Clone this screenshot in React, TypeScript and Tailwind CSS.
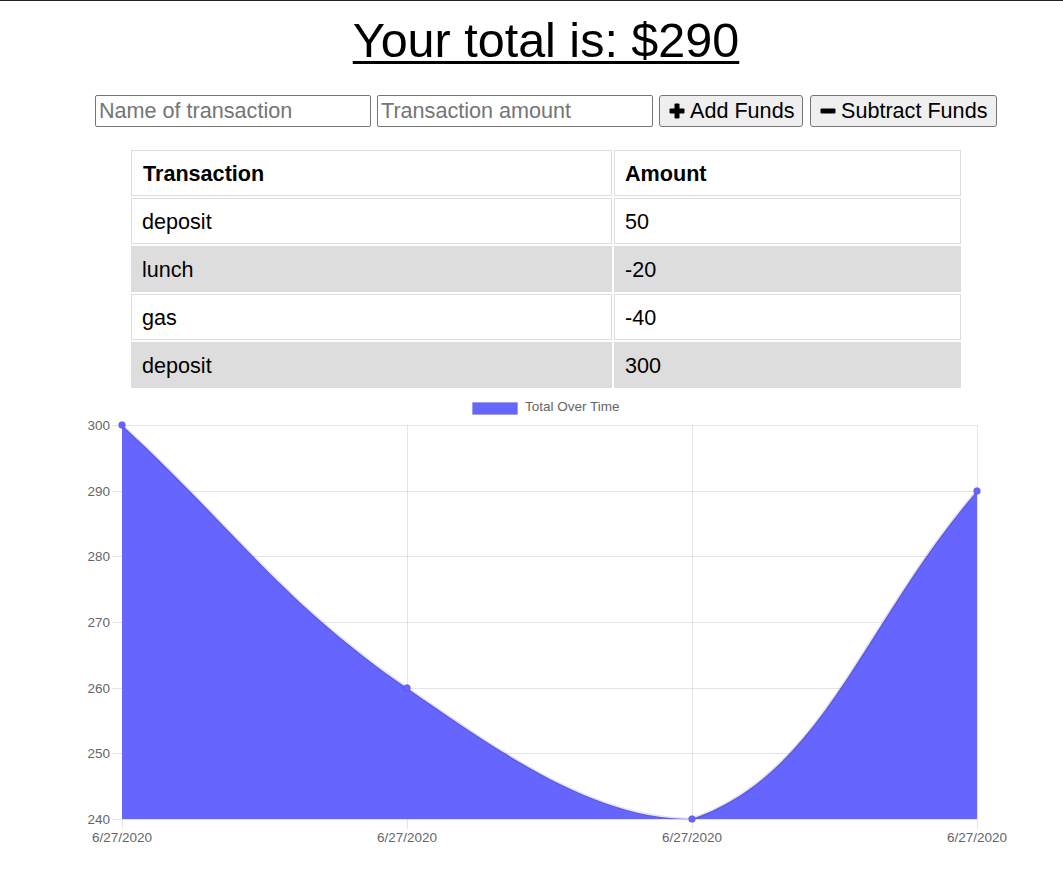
import React from "react";

const rows = [
  { name: "deposit", amount: "50" },
  { name: "lunch", amount: "-20" },
  { name: "gas", amount: "-40" },
  { name: "deposit", amount: "300" },
];

const yTicks = [300, 290, 280, 270, 260, 250, 240];
const xTicks = [122, 407, 692, 977];
const top = 425;
const bottom = 819;
const step = (bottom - top) / 6;

function PlusIcon() {
  return (
    <svg width={16} height={16} viewBox="0 0 16 16" className="block">
      <rect x={5.5} y={0.5} width={5} height={15} rx={1} fill="#000" />
      <rect x={0.5} y={5.5} width={15} height={5} rx={1} fill="#000" />
    </svg>
  );
}

function MinusIcon() {
  return (
    <svg width={16} height={16} viewBox="0 0 16 16" className="block">
      <rect x={0.5} y={5.5} width={15} height={5} rx={1} fill="#000" />
    </svg>
  );
}

function Chart() {
  const curve =
    "M122,425 C236,530.2 281,600.9 407,688 C509,758.5 596.4,819 692,819 C824.4,773.2 863,622.2 977,491";
  const pts: [number, number][] = [
    [122, 425],
    [407, 688],
    [692, 819],
    [977, 491],
  ];
  return (
    <svg width={1063} height={472} className="block" style={{ fontFamily: "'Liberation Sans', Arial, sans-serif" }}>
      <g transform="translate(0,-388)">
        <rect x={472.5} y={402.5} width={45} height={12} fill="#6666ff" stroke="rgba(0,0,0,0.1)" strokeWidth={1} />
        <text x={525} y={407.5} fontSize={13.5} fill="#666" dominantBaseline="middle">
          Total Over Time
        </text>
        {yTicks.map((v, i) => {
          const y = Math.round(top + i * step) + 0.5;
          return (
            <g key={v}>
              <line x1={112} x2={977} y1={y} y2={y} stroke="rgba(0,0,0,0.1)" strokeWidth={1} />
              <text x={110} y={y + 0.5} fontSize={13.5} fill="#666" textAnchor="end" dominantBaseline="middle">
                {v}
              </text>
            </g>
          );
        })}
        {xTicks.map((x) => (
          <g key={x}>
            <line x1={x + 0.5} x2={x + 0.5} y1={top} y2={bottom + 10} stroke="rgba(0,0,0,0.1)" strokeWidth={1} />
            <text x={x} y={838.5} fontSize={13.5} fill="#666" textAnchor="middle" dominantBaseline="middle">
              6/27/2020
            </text>
          </g>
        ))}
        <path d={`${curve} L977,819 L122,819 Z`} fill="#6666ff" />
        <path d={curve} fill="none" stroke="rgba(0,0,0,0.1)" strokeWidth={3} />
        {pts.map(([x, y], i) => (
          <circle key={i} cx={x} cy={y} r={3.5} fill="#6666ff" stroke="rgba(0,0,0,0.1)" strokeWidth={1} />
        ))}
      </g>
    </svg>
  );
}

export default function App() {
  return (
    <div className="w-[1063px] min-h-[889px] bg-white border-t border-[#222] font-['Liberation_Sans',Arial,sans-serif] text-black">
      <div className="pl-[29px]">
        <h1 className="mt-[11px] text-center text-[48.5px] leading-[56px] font-normal underline decoration-[3px] underline-offset-[4px]">
          Your total is: $290
        </h1>
        <div className="mt-[27px] flex justify-center items-center">
          <input
            placeholder="Name of transaction"
            className="w-[276px] h-[32px] px-[3px] border border-[#767676] rounded-[2px] text-[21.6px] placeholder:text-[#757575] outline-none"
          />
          <input
            placeholder="Transaction amount"
            className="ml-[6px] w-[276px] h-[32px] px-[3px] border border-[#767676] rounded-[2px] text-[21.6px] placeholder:text-[#757575] outline-none"
          />
          <button className="ml-[6px] w-[144px] h-[32px] flex items-center gap-[5px] pl-[9px] bg-[#efefef] border border-[#767676] rounded-[3px] text-[21.6px] text-black">
            <PlusIcon />
            <span>Add Funds</span>
          </button>
          <button className="ml-[7px] w-[187px] h-[32px] flex items-center gap-[5px] pl-[9px] bg-[#efefef] border border-[#767676] rounded-[3px] text-[21.6px] text-black">
            <MinusIcon />
            <span>Subtract Funds</span>
          </button>
        </div>
        <div className="mt-[23px] flex justify-center">
          <div className="grid grid-cols-[481px_347px] gap-[2px] text-[21.6px]">
            <div className="h-[46px] flex items-center pt-[2px] pl-[11px] border border-[#ddd] font-bold">Transaction</div>
            <div className="h-[46px] flex items-center pt-[2px] pl-[10px] border border-[#ddd] font-bold">Amount</div>
            {rows.map((r, i) => {
              const striped = i % 2 === 1;
              const cls = striped
                ? "h-[46px] flex items-center pt-[2px] border border-[#ddd] bg-[#ddd]"
                : "h-[46px] flex items-center pt-[2px] border border-[#ddd] bg-white";
              return (
                <React.Fragment key={i}>
                  <div className={`${cls} pl-[10px]`}>{r.name}</div>
                  <div className={`${cls} pl-[10px]`}>{r.amount}</div>
                </React.Fragment>
              );
            })}
          </div>
        </div>
      </div>
      <Chart />
    </div>
  );
}
